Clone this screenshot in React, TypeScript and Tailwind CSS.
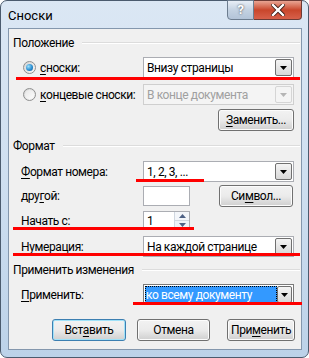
import React from "react";

const FONT = { fontFamily: 'Roboto, "Noto Sans", sans-serif' };

function U({ c }: { c: string }) {
  return <span className="underline decoration-1 underline-offset-[2px]">{c}</span>;
}

function Arrow({ color = "#000" }: { color?: string }) {
  return (
    <svg width="7" height="4" viewBox="0 0 7 4">
      <polygon points="0,0 7,0 3.5,4" fill={color} />
    </svg>
  );
}

function DropBtn({ disabled }: { disabled?: boolean }) {
  return (
    <div
      className={
        disabled
          ? "w-[17px] h-[17px] border border-[#d5d5d5] bg-[#f4f4f4] rounded-[2px] flex items-center justify-center"
          : "w-[17px] h-[17px] border border-[#707070] bg-gradient-to-b from-[#f4f4f4] to-[#d8d8d8] rounded-[2px] flex items-center justify-center"
      }
    >
      <Arrow color={disabled ? "#b5b5b5" : "#000"} />
    </div>
  );
}

function Combo({ text, disabled, selected }: { text: string; disabled?: boolean; selected?: boolean }) {
  return (
    <div
      className={
        disabled
          ? "h-[21px] w-[151px] border border-[#cfcfcf] bg-[#f4f4f4] flex items-center pl-[2px] pr-[1px]"
          : selected
          ? "h-[21px] w-[151px] border border-[#7a7a7a] bg-white flex items-center pl-[1px] pr-[1px]"
          : "h-[21px] w-[151px] border border-[#abadb3] bg-white flex items-center pl-[2px] pr-[1px]"
      }
    >
      <div className="flex-1 h-full flex items-center">
        {selected ? (
          <div className="h-[17px] w-[132px] bg-[#3399ff] text-white flex items-center pl-[1px] outline-1 outline-dotted outline-[#000] -outline-offset-1 text-[12px]">
            {text}
          </div>
        ) : (
          <span className={disabled ? "text-[12px] text-[#a0a0a0] pl-[1px]" : "text-[12px] text-black pl-[1px]"}>{text}</span>
        )}
      </div>
      <DropBtn disabled={disabled} />
    </div>
  );
}

function Btn({ children, w, def }: { children: React.ReactNode; w: string; def?: boolean }) {
  return (
    <div
      className={
        (def
          ? "border border-[#3c7fb1] shadow-[inset_0_0_0_1px_#9fe1f8] "
          : "border border-[#707070] shadow-[inset_0_0_0_1px_#fcfcfc] ") +
        "h-[22px] rounded-[3px] bg-gradient-to-b from-[#f2f2f2] via-[#ebebeb] to-[#cfcfcf] flex items-center justify-center text-[12px] text-black " +
        w
      }
    >
      {children}
    </div>
  );
}

function Header({ text }: { text: string }) {
  return (
    <div className="h-[16px] flex items-center pl-[4px] pr-[1px]">
      <span className="text-[12px] text-black whitespace-nowrap">{text}</span>
      <div className="flex-1 ml-[8px] h-[2px] border-t border-[#dcdcdc] border-b-white border-b" />
    </div>
  );
}

function Radio({ checked }: { checked?: boolean }) {
  return (
    <div className="w-[13px] h-[13px] rounded-full border border-[#8e8f8f] bg-gradient-to-br from-[#d4d4d4] to-[#f8f8f8] flex items-center justify-center">
      {checked ? (
        <div className="w-[7px] h-[7px] rounded-full bg-[radial-gradient(circle_at_35%_35%,#9fe1fb,#2a8ed2_55%,#0c4f86)]" />
      ) : (
        <div className="w-[9px] h-[9px] rounded-full bg-gradient-to-br from-[#e6e6e6] to-[#fdfdfd]" />
      )}
    </div>
  );
}

function Red({ x, y, w }: { x: number; y: number; w: number }) {
  return <div className="absolute h-[3px] bg-[#ff0000]" style={{ left: x, top: y, width: w }} />;
}

export default function App() {
  return (
    <div style={FONT} className="w-[309px] h-[358px] overflow-hidden bg-white tracking-[-0.4px]">
      <div className="relative w-[309px] h-[358px] rounded-[7px] border border-[#4b5b6e] bg-gradient-to-b from-[#dbe7f4] via-[#cfdff0] to-[#bcd2e9] flex flex-col">
        {/* title bar */}
        <div className="h-[27px] flex items-start justify-between">
          <div className="pl-[7px] pt-[5px] text-[13px] text-black tracking-normal">Сноски</div>
          <div className="flex mr-[6px] -mt-[1px]">
            <div className="w-[27px] h-[20px] border border-[#6d7d8f] rounded-bl-[4px] bg-gradient-to-b from-[#e8eef6] via-[#c4d2e2] to-[#b3c4d8] flex items-center justify-center text-white font-bold text-[13px] [text-shadow:0_0_2px_#333]">
              ?
            </div>
            <div className="w-[48px] h-[20px] border border-l-0 border-[#6d3b35] rounded-br-[4px] bg-gradient-to-b from-[#e8a493] via-[#c9462b] to-[#d7604a] flex items-center justify-center">
              <svg width="14" height="12" viewBox="0 0 14 12">
                <path d="M2 1 L12 11 M12 1 L2 11" stroke="#3a1a14" strokeWidth="4" strokeLinecap="square" />
                <path d="M2 1 L12 11 M12 1 L2 11" stroke="#ffffff" strokeWidth="2.4" strokeLinecap="square" />
              </svg>
            </div>
          </div>
        </div>
        {/* client */}
        <div className="ml-[7px] w-[294px] h-[322px] border border-[#8497ad] bg-[#f0f0f0] flex flex-col">
          <div className="mt-[6px]">
            <Header text="Положение" />
          </div>
          <div className="mt-[6px] h-[21px] flex items-center">
            <div className="ml-[14px] w-[120px] flex items-center">
              <Radio checked />
              <span className="ml-[4px] text-[12px] text-black">
                <U c="с" />
                носки:
              </span>
            </div>
            <Combo text="Внизу страницы" />
          </div>
          <div className="mt-[6px] h-[21px] flex items-center">
            <div className="ml-[14px] w-[120px] flex items-center">
              <Radio />
              <span className="ml-[4px] text-[12px] text-black whitespace-nowrap">
                <U c="к" />
                онцевые сноски:
              </span>
            </div>
            <Combo text="В конце документа" disabled />
          </div>
          <div className="mt-[4px] flex justify-end pr-[7px]">
            <Btn w="w-[76px]">
              <U c="З" />
              аменить...
            </Btn>
          </div>
          <div className="mt-[7px]">
            <Header text="Формат" />
          </div>
          <div className="mt-[7px] h-[21px] flex items-center">
            <div className="ml-[12px] w-[122px] text-[12px] text-black">
              <U c="Ф" />
              ормат номера:
            </div>
            <Combo text="1, 2, 3, ..." />
          </div>
          <div className="mt-[3px] h-[22px] flex items-center">
            <div className="ml-[12px] w-[122px] text-[12px] text-black">
              дру
              <U c="г" />
              ой:
            </div>
            <div className="w-[47px] h-[20px] border border-[#abadb3] bg-white" />
            <div className="ml-[29px]">
              <Btn w="w-[74px]">
                Си
                <U c="м" />
                вол...
              </Btn>
            </div>
          </div>
          <div className="mt-[4px] h-[19px] flex items-center">
            <div className="ml-[12px] w-[122px] text-[12px] text-black">
              <U c="Н" />
              ачать с:
            </div>
            <div className="w-[47px] h-[19px] border border-[#abadb3] bg-white flex items-center">
              <span className="flex-1 pl-[3px] text-[12px] text-black">1</span>
              <div className="w-[15px] h-[17px] flex flex-col border-l border-[#d0d7e0]">
                <div className="flex-1 flex items-center justify-center bg-[#f3f6fa]">
                  <svg width="7" height="4" viewBox="0 0 7 4">
                    <polygon points="0,4 7,4 3.5,0" fill="#4d6185" />
                  </svg>
                </div>
                <div className="flex-1 flex items-center justify-center bg-[#eef2f7] border-t border-[#d0d7e0]">
                  <svg width="7" height="4" viewBox="0 0 7 4">
                    <polygon points="0,0 7,0 3.5,4" fill="#4d6185" />
                  </svg>
                </div>
              </div>
            </div>
          </div>
          <div className="mt-[6px] h-[21px] flex items-center">
            <div className="ml-[12px] w-[122px] text-[12px] text-black">
              Нум
              <U c="е" />
              рация:
            </div>
            <Combo text="На каждой странице" />
          </div>
          <div className="mt-[5px]">
            <Header text="Применить изменения" />
          </div>
          <div className="mt-[6px] h-[21px] flex items-center">
            <div className="ml-[12px] w-[122px] text-[12px] text-black">
              <U c="П" />
              рименить:
            </div>
            <Combo text="ко всему документу" selected />
          </div>
          <div className="mt-[14px] flex pl-[43px]">
            <Btn w="w-[74px]" def>
              Вст
              <U c="а" />
              вить
            </Btn>
            <div className="ml-[11px]">
              <Btn w="w-[73px]">Отмена</Btn>
            </div>
            <div className="ml-[17px]">
              <Btn w="w-[68px]">
                При
                <U c="м" />
                енить
              </Btn>
            </div>
          </div>
        </div>
        {/* red annotation lines */}
        <Red x={15} y={76} w={284} />
        <Red x={135} y={178} w={68} />
        <Red x={12} y={226} w={181} />
        <Red x={12} y={252} w={287} />
        <Red x={132} y={301} w={169} />
      </div>
    </div>
  );
}
